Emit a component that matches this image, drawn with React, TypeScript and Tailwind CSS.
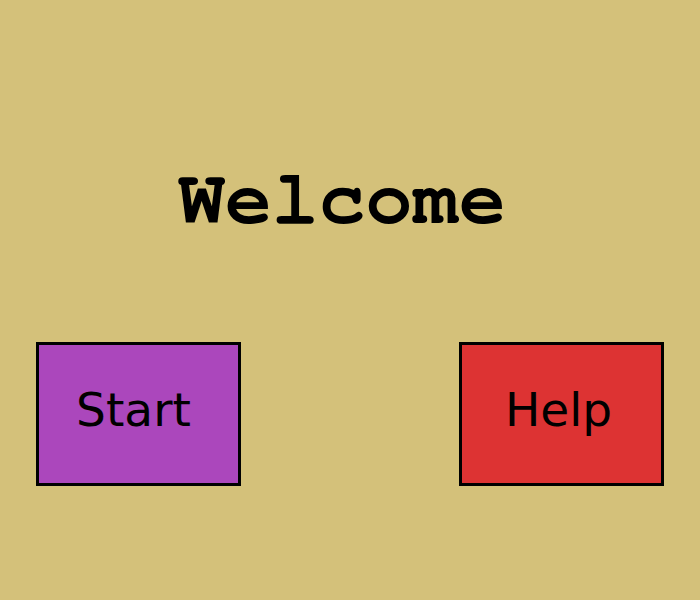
export default function App() {
  return (
    <div className="w-[700px] h-[600px] bg-[#d4c17a] flex flex-col">
      {/* Title */}
      <div className="h-[342px] flex justify-center pt-[155px] pr-[16px]">
        <h1 className="font-['FreeMono','Liberation_Mono',monospace] font-bold text-[78px] leading-[90px] text-black">
          Welcome
        </h1>
      </div>

      {/* Buttons */}
      <div className="flex justify-between pl-[36px] pr-[36px]">
        <button className="w-[205px] h-[144px] bg-[#ab47bc] border-[3px] border-black flex items-center justify-center pb-[8px] pr-[10px] font-['DejaVu_Sans',sans-serif] text-[47px] text-black">
          Start
        </button>
        <button className="w-[205px] h-[144px] bg-[#dd3333] border-[3px] border-black flex items-center justify-center pb-[8px] pr-[6px] font-['DejaVu_Sans',sans-serif] text-[47px] text-black">
          Help
        </button>
      </div>
    </div>
  );
}
